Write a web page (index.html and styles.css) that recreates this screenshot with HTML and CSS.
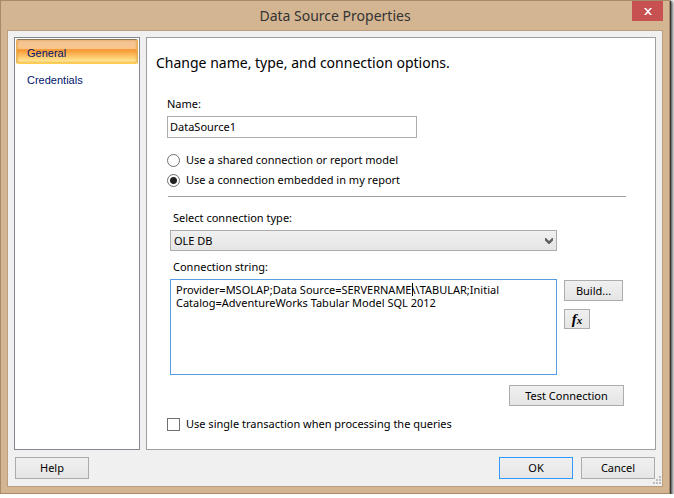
FILE: index.html
```html
<!DOCTYPE html>
<html lang="en">
<head>
<meta charset="utf-8">
<title>Data Source Properties</title>
<link rel="stylesheet" href="styles.css">
</head>
<body>
<main class="window">
  <header class="titlebar">
    <h1 class="title">Data Source Properties</h1>
    <button class="close" type="button" aria-label="Close">
      <svg width="8" height="7" viewBox="0 0 8 7"><path d="M0 0h2l2 2.2L6 0h2L5 3.5 8 7H6L4 4.8 2 7H0l3-3.5z" fill="#fff"/></svg>
    </button>
  </header>
  <form class="client">
    <div class="columns">
      <nav class="nav">
        <a class="nav-item nav-item-active" href="#general">General</a>
        <a class="nav-item" href="#credentials">Credentials</a>
      </nav>
      <section class="panel" id="general">
        <h2 class="heading">Change name, type, and connection options.</h2>
        <div class="fields">
          <label class="label" for="name">Name:</label>
          <input class="text" id="name" type="text" value="DataSource1">
          <label class="choice choice-first"><input class="radio" type="radio" name="kind">Use a shared connection or report model</label>
          <label class="choice"><input class="radio" type="radio" name="kind" checked>Use a connection embedded in my report</label>
          <hr class="rule">
          <div class="connection">
            <label class="label label-inset" for="type">Select connection type:</label>
            <div class="select-wrap">
              <select class="select" id="type"><option>OLE DB</option></select>
              <svg class="arrow" width="8" height="6" viewBox="0 0 8 6"><path d="M0 0h1l3 3 3-3h1v2.500L4.500 6h-1L0 2.500z" fill="#606060"/></svg>
            </div>
            <label class="label label-inset" for="string">Connection string:</label>
            <div class="string-row">
              <div class="string-wrap">
                <textarea class="string" id="string" spellcheck="false">Provider=MSOLAP;Data Source=SERVERNAME\\TABULAR;Initial Catalog=AdventureWorks Tabular Model SQL 2012</textarea>
                <span class="caret"></span>
              </div>
              <div class="side">
                <button class="button build" type="button">Build...</button>
                <button class="button fx" type="button" aria-label="Expression"><i>f</i><i class="fx-x">x</i></button>
              </div>
            </div>
            <button class="button test" type="button">Test Connection</button>
          </div>
          <label class="choice choice-last"><input class="check" type="checkbox">Use single transaction when processing the queries</label>
        </div>
      </section>
    </div>
    <footer class="footer">
      <button class="button action" type="button">Help</button>
      <button class="button action ok" type="button">OK</button>
      <button class="button action" type="button">Cancel</button>
    </footer>
    <svg class="grip" width="8" height="8" viewBox="0 0 8 8"><path d="M6 0h2v2H6zM3 3h2v2H3zM6 3h2v2H6zM0 6h2v2H0zM3 6h2v2H3zM6 6h2v2H6z" fill="#bdbdbd"/></svg>
  </form>
</main>
</body>
</html>
```

FILE: styles.css
```css
* { box-sizing: border-box; }

body {
  margin: 0;
  background: #fff;
  color: #000;
  font: 11px/14px "Noto Sans", "Open Sans", sans-serif;
  overflow: hidden;
}

button, input, select, textarea { font: inherit; color: inherit; margin: 0; }

.window {
  display: flex;
  flex-direction: column;
  height: calc(100vh - 4px);
  margin-right: 4px;
  padding: 0 6px 6px;
  border: 1px solid #a58a6c;
  background: #d3b592;
  box-shadow: 1px 1px 1px #333, 2px 2px 3px 1px #666;
}

.titlebar {
  position: relative;
  flex: none;
  height: 29px;
}

.title {
  margin: 0;
  font-size: 14px;
  line-height: 29px;
  font-weight: 400;
  text-align: center;
  color: #333;
}

.close {
  position: absolute;
  top: 0;
  right: 0;
  display: grid;
  place-items: center;
  width: 31px;
  height: 20px;
  padding: 0;
  border: 0;
  background: #c75050;
}

.client {
  position: relative;
  flex: 1;
  display: flex;
  flex-direction: column;
  padding: 6px;
  border: 1px solid #bb9e7c;
  background: #f0f0f0;
}

.columns { flex: 1; display: flex; gap: 6px; }

.nav {
  flex: none;
  width: 126px;
  padding: 1px;
  border: 1px solid #828790;
  background: #fff;
}

.nav-item {
  display: block;
  height: 25px;
  margin-bottom: 2px;
  padding-left: 10px;
  border: 1px solid transparent;
  border-radius: 2px;
  font: 11px/26px "Liberation Sans", Arial, sans-serif;
  color: #00156e;
  text-decoration: none;
}

.nav-item-active {
  border-color: #8e7251 #e9b152 #ffd048;
  background: linear-gradient(#f3c59c, #fbc589 38%, #f7952f 42%, #fbb658 62%, #ffe48e 90%, #ffe07a);
  box-shadow: inset 0 0 3px #e09a45;
}

.panel {
  flex: 1;
  padding: 14px 29px 0 9px;
  border: 1px solid #a0a0a0;
  background: #fff;
}

.heading {
  margin: 0;
  font-size: 14px;
  line-height: 22px;
  font-weight: 400;
}

.fields { padding: 23px 0 0 11px; }
.label { display: block; }
.label-inset { padding-left: 3px; }

.text {
  display: block;
  width: 250px;
  height: 22px;
  margin: 5px 0 15px;
  padding: 0 2px 2px;
  border: 1px solid #ababab;
  background: #fff;
}

.choice { display: flex; align-items: center; gap: 6px; }
.choice-first { margin-bottom: 6px; }
.choice-last { margin-top: 11px; }

.radio, .check {
  appearance: none;
  flex: none;
  width: 13px;
  height: 13px;
  border: 1px solid #707070;
  background: #fff;
}

.radio { border-radius: 50%; }
.radio:checked { background: radial-gradient(circle, #222 3px, #fff 4px); }

.rule { margin: 9px 0 0 1px; border: 0; border-top: 1px solid #a0a0a0; }

.connection { padding: 14px 2px 0 3px; display: flex; flex-direction: column; }

.select-wrap { position: relative; width: 387px; margin: 5px 0 9px; }

.select {
  appearance: none;
  display: block;
  width: 100%;
  height: 21px;
  padding: 0 3px;
  border: 1px solid #acacac;
  border-radius: 0;
  background: linear-gradient(#f0f0f0, #e5e5e5);
}

.arrow { position: absolute; right: 4px; top: 8px; pointer-events: none; }

.string-row { display: flex; gap: 7px; margin-top: 5px; }
.string-wrap { position: relative; width: 387px; }

.string {
  display: block;
  width: 100%;
  height: 96px;
  padding: 3px 40px 3px 5px;
  border: 1px solid #569de5;
  background: #fff;
  line-height: 13px;
  resize: none;
}

.caret { position: absolute; left: 242px; top: 4px; width: 1px; height: 13px; background: #000; }

.side { padding-top: 1px; }

.button {
  display: block;
  padding: 0;
  border: 1px solid #acacac;
  background: linear-gradient(#f0f0f0, #e5e5e5);
}

.build { width: 59px; height: 21px; }

.fx {
  width: 26px;
  height: 20px;
  margin-top: 8px;
  font: bold 15px/16px "Liberation Serif", serif;
}

.fx-x { font-size: 11px; }
.test { align-self: flex-end; width: 115px; height: 21px; margin-top: 10px; }

.footer { display: flex; gap: 8px; padding: 7px 1px 1px; }
.action { width: 74px; height: 22px; }
.ok { margin-left: auto; border-color: #3399ff; }
.grip { position: absolute; right: 1px; bottom: 2px; }
```
